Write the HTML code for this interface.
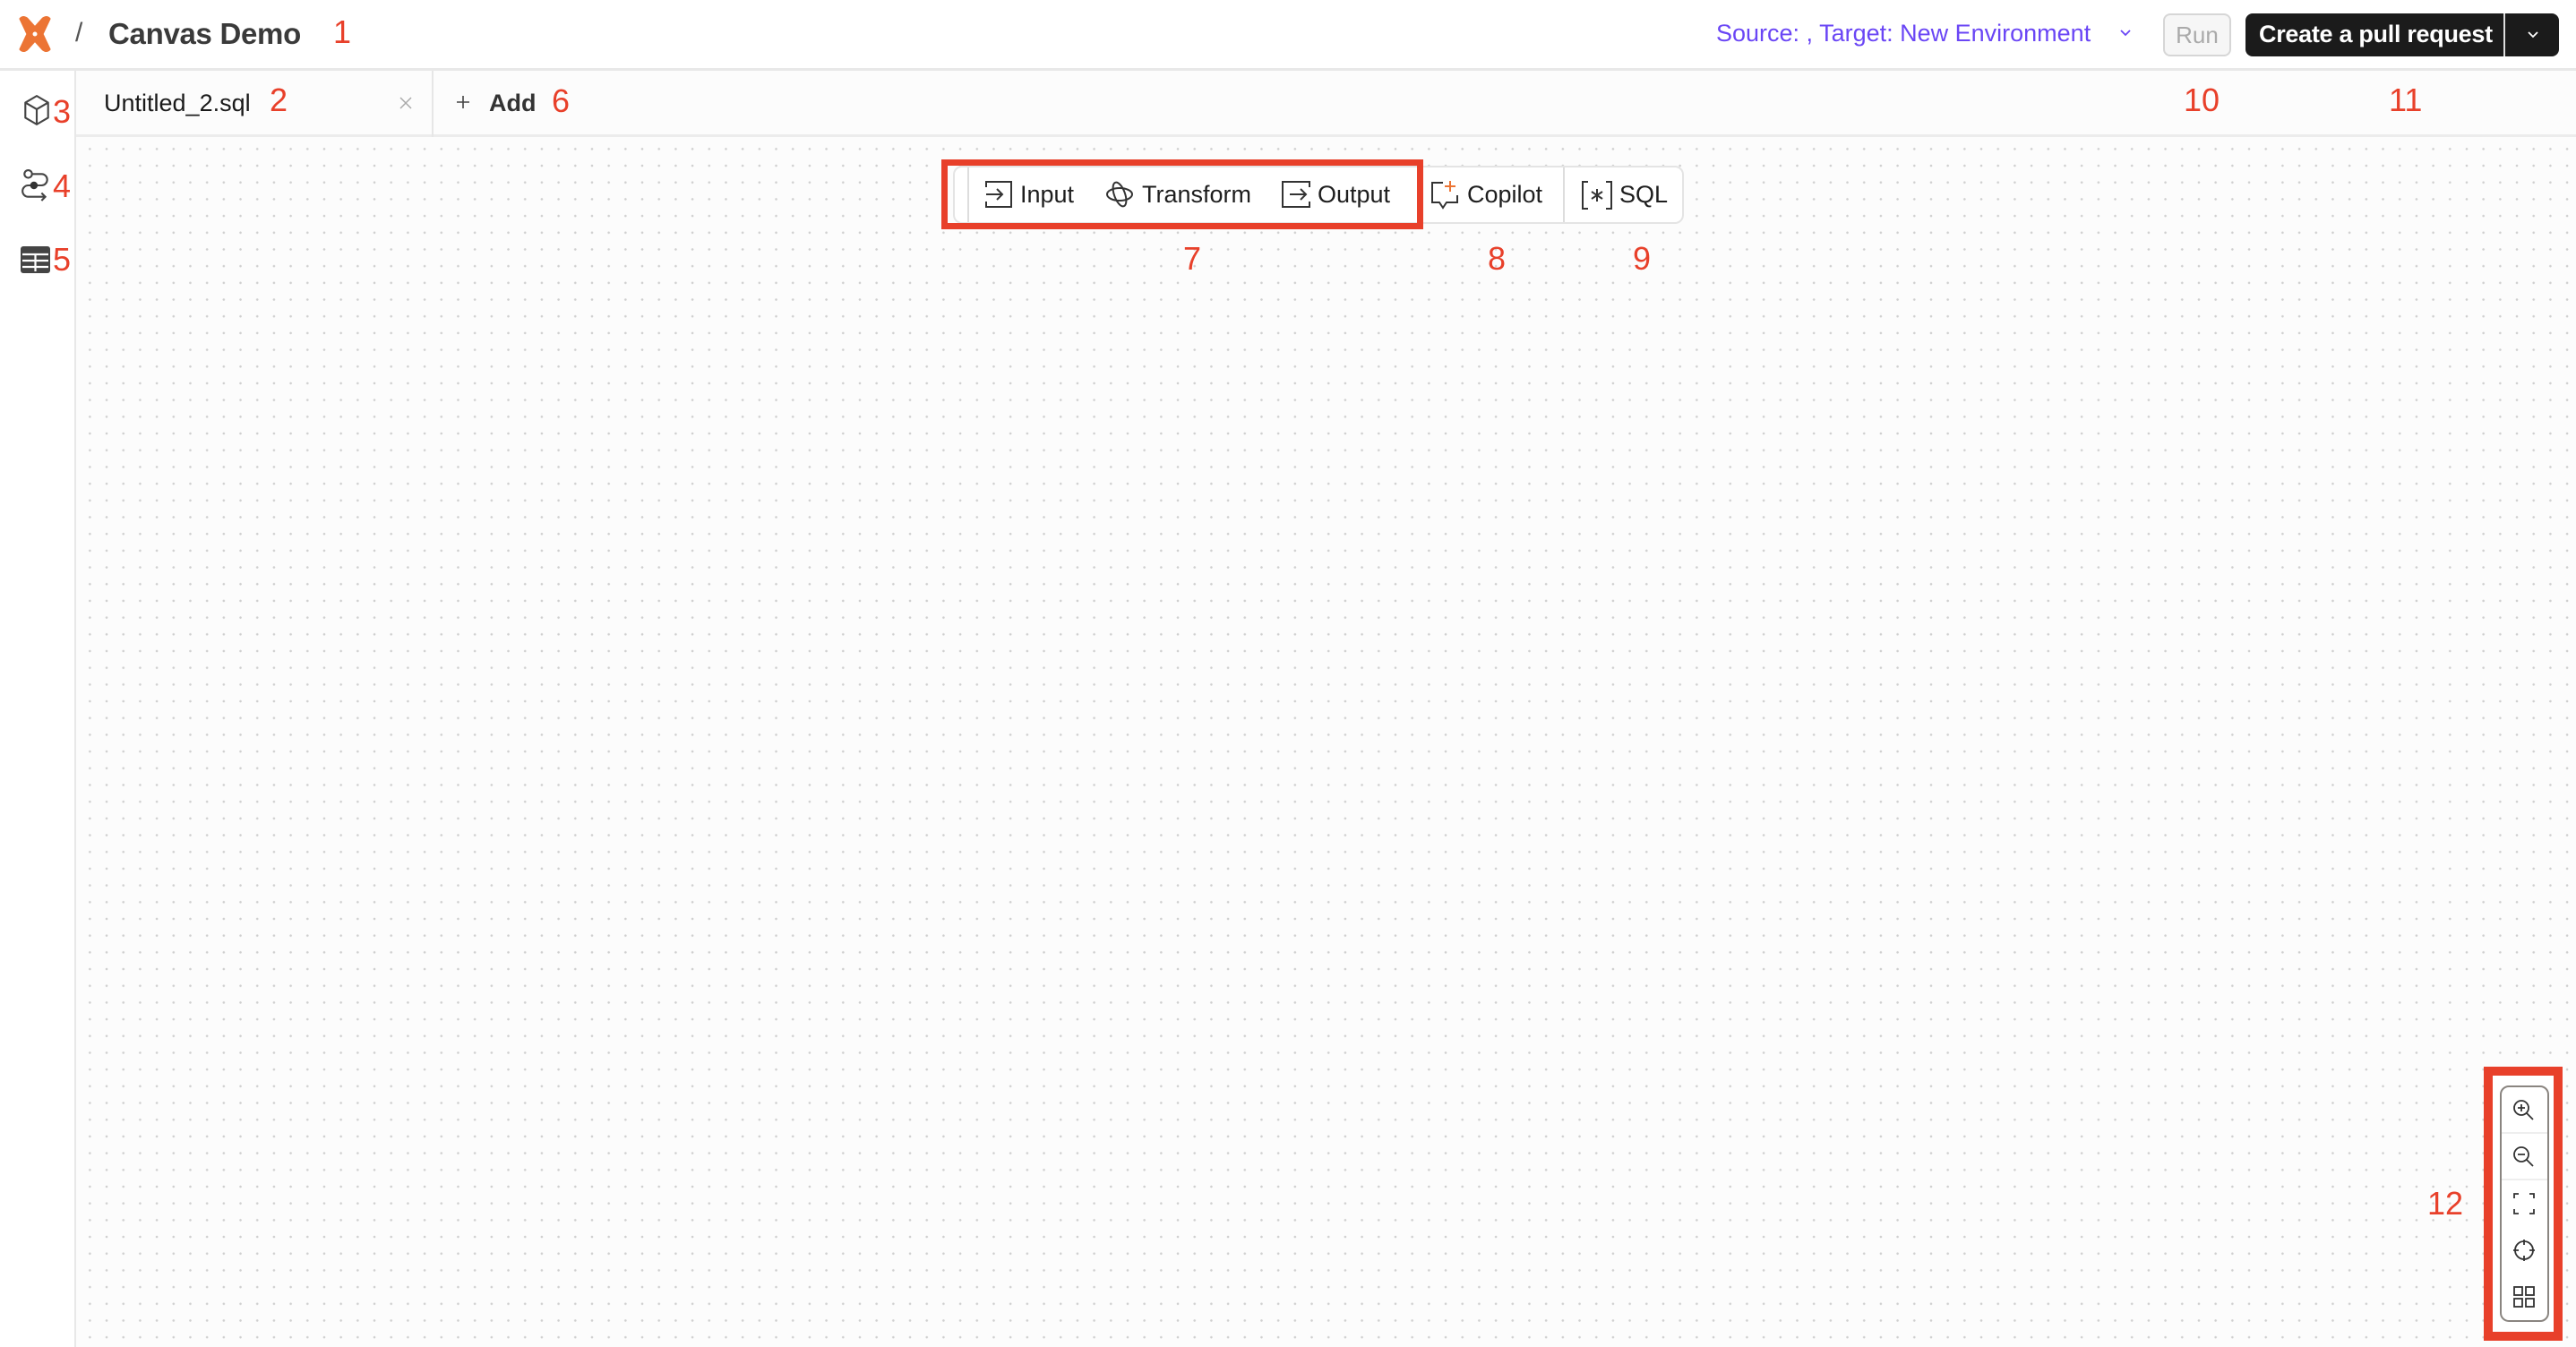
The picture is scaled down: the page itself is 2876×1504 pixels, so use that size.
<!DOCTYPE html>
<html><head><meta charset="utf-8"><style>
*{margin:0;padding:0;box-sizing:border-box}
body{width:2876px;height:1504px;overflow:hidden;background:#fff;font-family:"Liberation Sans",sans-serif;position:relative;color:#222}
.a{position:absolute}
.lbl{position:absolute;color:#e8402a;font-size:36px;line-height:1}
#hdr{left:0;top:0;width:2876px;height:79px;border-bottom:3px solid #e8e8e8;background:#fff}
#side{left:0;top:79px;width:85px;height:1425px;border-right:2px solid #e8e8e8;background:#fff}
#tabs{left:85px;top:79px;width:2791px;height:74px;border-bottom:3px solid #ececec;background:#fcfcfc}
#canvas{left:85px;top:153px;width:2791px;height:1351px;background-color:#fcfcfc;background-image:radial-gradient(circle,#cfcfcf 1.1px,transparent 1.5px);background-size:18.7px 18.7px;background-position:6px 4px}
.tb{font-size:27px;color:#1e1e1e;position:absolute;top:202px;line-height:30px}
svg{position:absolute}
</style></head><body>
<div id="hdr" class="a"></div>
<div id="side" class="a"></div>
<div id="tabs" class="a"></div>
<div id="canvas" class="a"></div>

<!-- header -->
<svg style="left:18px;top:17px" width="42" height="42" viewBox="0 0 42 42"><path d="M5 4 Q8 1 12 4 L21 14 L30 4 Q34 1 37 4 L29 21 L37 38 Q34 41 30 38 L21 28 L12 38 Q8 41 5 38 L13 21 Z" fill="#ec7434" stroke="#ec7434" stroke-width="3" stroke-linejoin="round"/><circle cx="21" cy="21" r="2.5" fill="#fff"/></svg>
<div class="a" style="left:84px;top:20px;font-size:30px;color:#555">/</div>
<div class="a" style="left:121px;top:19px;font-size:33px;font-weight:bold;color:#3a3a3a;letter-spacing:-0.3px">Canvas Demo</div>
<div class="lbl" style="left:372px;top:18px">1</div>
<div class="a" style="left:1916px;top:22px;font-size:27px;color:#6a46f5">Source: , Target: New Environment</div>
<svg style="left:2366px;top:32px" width="14" height="10" viewBox="0 0 14 10"><path d="M2 2 L7 7 L12 2" stroke="#6a46f5" stroke-width="1.8" fill="none"/></svg>
<div class="a" style="left:2415px;top:15px;width:76px;height:48px;border:2px solid #d6d6d6;border-radius:8px;background:#f6f6f6;color:#aaa;font-size:26px;text-align:center;line-height:44px">Run</div>
<div class="a" style="left:2507px;top:15px;width:350px;height:48px;background:#1b1b1b;border-radius:8px"></div>
<div class="a" style="left:2522px;top:23px;font-size:27px;color:#fff;font-weight:bold;letter-spacing:-0.3px">Create a pull request</div>
<div class="a" style="left:2795px;top:15px;width:2px;height:48px;background:#ddd"></div>
<svg style="left:2821px;top:34px" width="14" height="10" viewBox="0 0 14 10"><path d="M2 2 L7 7 L12 2" stroke="#fff" stroke-width="1.8" fill="none"/></svg>

<!-- sidebar icons -->
<svg style="left:24px;top:105px" width="34" height="36" viewBox="0 0 28 34"><path d="M14 2 L26 9 L26 25 L14 32 L2 25 L2 9 Z M2 9 L14 16 L26 9 M14 16 L14 32" stroke="#444" stroke-width="2" fill="none" stroke-linejoin="round"/></svg>
<div class="lbl" style="left:59px;top:107px">3</div>
<svg style="left:22px;top:189px" width="36" height="36" viewBox="0 0 28 34"><circle cx="6" cy="5" r="4" stroke="#444" stroke-width="2" fill="none"/><path d="M10 5 H20 a6 6 0 0 1 0 12 H6 a6 6 0 0 0 0 12 H24 M20 25 L24 29 L20 33" stroke="#444" stroke-width="2" fill="none"/><circle cx="12" cy="17" r="4" fill="#333"/></svg>
<div class="lbl" style="left:59px;top:190px">4</div>
<svg style="left:22px;top:274px" width="35" height="32" viewBox="0 0 35 32"><rect x="1" y="1" width="33" height="30" rx="3" fill="#444"/><path d="M3 10 H32 M3 17 H32 M3 24 H32 M17.5 10 V29" stroke="#fff" stroke-width="2.2"/></svg>
<div class="lbl" style="left:59px;top:272px">5</div>

<!-- tabs -->
<div class="a" style="left:116px;top:100px;font-size:27px;color:#1a1a1a">Untitled_2.sql</div>
<div class="lbl" style="left:301px;top:94px">2</div>
<svg style="left:445px;top:107px" width="16" height="16" viewBox="0 0 16 16"><path d="M2 2 L14 14 M14 2 L2 14" stroke="#aaa" stroke-width="1.5"/></svg>
<div class="a" style="left:482px;top:79px;width:2px;height:74px;background:#e6e6e6"></div>
<svg style="left:509px;top:106px" width="16" height="16" viewBox="0 0 16 16"><path d="M8 1 V15 M1 8 H15" stroke="#444" stroke-width="1.6"/></svg>
<div class="a" style="left:546px;top:100px;font-size:27px;color:#333;font-weight:bold">Add</div>
<div class="lbl" style="left:616px;top:95px">6</div>
<div class="lbl" style="left:2438px;top:94px">10</div>
<div class="lbl" style="left:2667px;top:94px">11</div>

<!-- toolbar -->
<div class="a" style="left:1064px;top:185px;width:816px;height:65px;background:#fff;border:2px solid #e4e4e4;border-radius:10px"></div>
<div class="a" style="left:1080px;top:187px;width:2px;height:61px;background:#ddd"></div>
<div class="a" style="left:1587px;top:187px;width:2px;height:61px;background:#ddd"></div>
<div class="a" style="left:1745px;top:187px;width:2px;height:61px;background:#ddd"></div>
<div class="a" style="left:1051px;top:178px;width:538px;height:78px;border:7px solid #e8402a"></div>
<svg style="left:1099px;top:201px" width="34" height="32" viewBox="0 0 34 32"><path d="M2 8 V2 H30 V30 H2 V24" stroke="#333" stroke-width="2" fill="none"/><path d="M2 16 H20 M14 10 L20 16 L14 22" stroke="#333" stroke-width="2" fill="none"/></svg>
<div class="tb" style="left:1139px">Input</div>
<svg style="left:1233px;top:199px" width="34" height="36" viewBox="0 0 34 36"><ellipse cx="17" cy="18" rx="14" ry="7" stroke="#333" stroke-width="2" fill="none"/><ellipse cx="17" cy="18" rx="6" ry="14" stroke="#333" stroke-width="2" fill="none" transform="rotate(-20 17 18)"/></svg>
<div class="tb" style="left:1275px">Transform</div>
<svg style="left:1430px;top:201px" width="34" height="32" viewBox="0 0 34 32"><path d="M32 8 V2 H2 V30 H32 V24" stroke="#333" stroke-width="2" fill="none"/><path d="M10 16 H28 M22 10 L28 16 L22 22" stroke="#333" stroke-width="2" fill="none"/></svg>
<div class="tb" style="left:1471px">Output</div>
<svg style="left:1597px;top:200px" width="34" height="36" viewBox="0 0 34 36"><path d="M14 4 H2 V26 H10 L14 32 L18 26 H30 V18" stroke="#333" stroke-width="2" fill="none"/><path d="M22 2 V14 M16 8 H28" stroke="#ec7434" stroke-width="2"/></svg>
<div class="tb" style="left:1638px">Copilot</div>
<svg style="left:1765px;top:201px" width="36" height="34" viewBox="0 0 36 34"><path d="M8 2 H2 V32 H8 M28 2 H34 V32 H28" stroke="#333" stroke-width="2" fill="none"/><path d="M18 10 V24 M12 13 L24 21 M24 13 L12 21" stroke="#333" stroke-width="2"/></svg>
<div class="tb" style="left:1808px">SQL</div>
<div class="lbl" style="left:1321px;top:271px">7</div>
<div class="lbl" style="left:1661px;top:271px">8</div>
<div class="lbl" style="left:1823px;top:271px">9</div>

<!-- zoom controls -->
<div class="a" style="left:2773px;top:1191px;width:88px;height:306px;border:10px solid #e8402a;background:#fff"></div>
<div class="a" style="left:2791px;top:1212px;width:55px;height:264px;border:2px solid #8a8580;border-radius:10px;background:#fff"></div>
<div class="a" style="left:2793px;top:1264px;width:51px;height:2px;background:#eee"></div>
<div class="a" style="left:2793px;top:1316px;width:51px;height:2px;background:#eee"></div>
<svg style="left:2804px;top:1226px" width="28" height="28" viewBox="0 0 28 28"><circle cx="11" cy="11" r="8" stroke="#333" stroke-width="1.8" fill="none"/><path d="M17 17 L24 24 M7 11 H15 M11 7 V15" stroke="#333" stroke-width="1.8"/></svg>
<svg style="left:2804px;top:1278px" width="28" height="28" viewBox="0 0 28 28"><circle cx="11" cy="11" r="8" stroke="#333" stroke-width="1.8" fill="none"/><path d="M17 17 L24 24 M7 11 H15" stroke="#333" stroke-width="1.8"/></svg>
<svg style="left:2805px;top:1331px" width="26" height="26" viewBox="0 0 26 26"><path d="M2 7 V2 H7 M19 2 H24 V7 M24 19 V24 H19 M7 24 H2 V19" stroke="#333" stroke-width="1.8" fill="none"/></svg>
<svg style="left:2805px;top:1383px" width="26" height="26" viewBox="0 0 26 26"><circle cx="13" cy="13" r="10" stroke="#333" stroke-width="1.8" fill="none"/><path d="M13 1 V7 M13 19 V25 M1 13 H7 M19 13 H25" stroke="#333" stroke-width="1.8"/></svg>
<svg style="left:2805px;top:1435px" width="26" height="26" viewBox="0 0 26 26"><rect x="2" y="2" width="9" height="9" stroke="#333" stroke-width="1.8" fill="none"/><rect x="15" y="2" width="9" height="9" stroke="#333" stroke-width="1.8" fill="none"/><rect x="2" y="15" width="9" height="9" stroke="#333" stroke-width="1.8" fill="none"/><rect x="15" y="15" width="9" height="9" stroke="#333" stroke-width="1.8" fill="none"/></svg>
<div class="lbl" style="left:2710px;top:1326px">12</div>
</body></html>
